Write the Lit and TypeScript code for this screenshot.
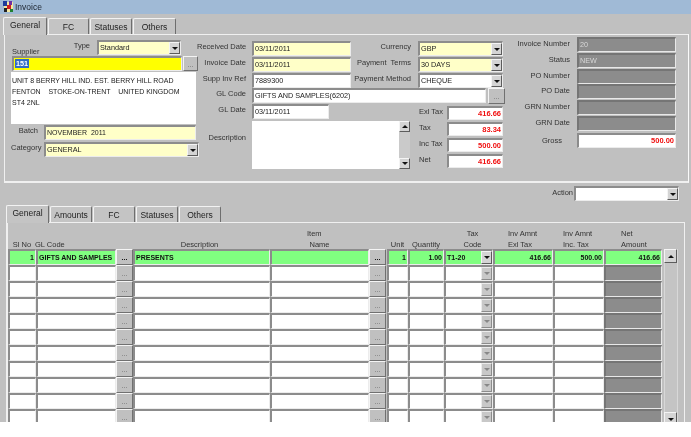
import { LitElement, html, css } from 'lit';
import { customElement } from 'lit/decorators.js';

@customElement('app-root')
export class AppRoot extends LitElement {
  static styles = css`
    :host {
      display: block;
      width: 691px;
      height: 437px;
      background: #fff;
      font-family: 'Liberation Sans', Arial, sans-serif;
      font-size: 7.5px;
      color: #222;
      overflow: hidden;
    }
    .screen {
      height: 422px;
      background: #c0c0c0;
      overflow: hidden;
      filter: blur(0.25px);
    }
    .title {
      height: 14px;
      background: #a0bad6;
      display: flex;
      align-items: center;
      padding-left: 3px;
      gap: 1px;
      font-size: 8.5px;
      color: #1c2430;
    }
    .tabs {
      display: flex;
      align-items: flex-end;
      box-sizing: border-box;
    }
    .tabs.top {
      height: 20px;
      padding-left: 3px;
      gap: 1px;
    }
    .tabs.low {
      height: 22px;
      padding-left: 6px;
      gap: 1px;
    }
    .tab {
      box-sizing: border-box;
      height: 16px;
      background: #c4c4c4;
      border: 1px solid #f2f2f2;
      border-right: 1px solid #6e6e6e;
      border-bottom: none;
      border-radius: 2px 2px 0 0;
      text-align: center;
      line-height: 16px;
      font-size: 8.5px;
    }
    .tab.on {
      height: 18px;
      line-height: 15px;
      position: relative;
      top: 1px;
      z-index: 1;
    }
    .upper {
      box-sizing: border-box;
      height: 149px;
      margin: 0 2px 0 4px;
      border: 1px solid #f0f0f0;
      border-width: 1px 1px 2px 1px;
      border-right-color: #fafafa;
      display: flex;
    }
    /* sunken text boxes */
    .in {
      box-sizing: border-box;
      height: 15px;
      line-height: 12px;
      border: 1px solid;
      border-width: 2px 1px 1px 2px;
      border-color: #8c8c8c #ececec #ececec #8c8c8c;
      background: #fff;
      padding-left: 1px;
      font-size: 7.25px;
      white-space: pre;
      overflow: hidden;
      color: #222;
      flex: none;
    }
    .y { background: #ffffc8; }
    .bright { background: #ffff00; }
    .grey { background: #8c8c8c; color: #d8d8d8; border-color: #757575 #e8e8e8 #e8e8e8 #757575; }
    .money { text-align: right; color: #f01010; font-weight: 700; padding-right: 1px; font-size: 7.5px; }
    .sel {
      background: #316ac5;
      color: #fff;
      font-weight: 700;
      padding: 0 1px;
    }
    .btn {
      box-sizing: border-box;
      flex: none;
      height: 15px;
      width: 15px;
      background: #c0c0c0;
      border: 1px solid;
      border-color: #f4f4f4 #707070 #707070 #f4f4f4;
      color: #666;
      text-align: center;
      line-height: 15px;
      font-size: 7px;
    }
    .btn.wide { width: 17px; height: 16px; margin-left: 2px; }
    /* dropdown: the frame is sunken, the arrow button sits inside it */
    .combo {
      box-sizing: border-box;
      display: flex;
      flex: none;
      height: 15px;
      border: 1px solid;
      border-width: 2px 1px 1px 2px;
      border-color: #8c8c8c #ececec #ececec #8c8c8c;
      background: #fff;
    }
    .combo .in { flex: 1; min-width: 0; border: none; height: 100%; line-height: 12px; background: transparent; }
    .combo.y { background: #ffffc8; }
    .combo.g { background: #80ff80; }
    .w84 { width: 84px; }
    .w85 { width: 85px; }
    .w99 { width: 99px; }
    .w105 { width: 105px; }
    .w155 { width: 155px; }
    .w152 { width: 152px; }
    .w170 { width: 170px; }
    .w234 { width: 234px; }
    .w77 { width: 77px; }
    .arrow {
      box-sizing: border-box;
      flex: none;
      width: 11px;
      background: #d4d4d4;
      border: 1px solid;
      border-color: #f4f4f4 #5c5c5c #5c5c5c #f4f4f4;
      display: flex;
      align-items: center;
      justify-content: center;
    }
    .arrow::after {
      content: '';
      border: 3px solid transparent;
      border-top: 3px solid #111;
      border-bottom: none;
    }
    .arrow.up::after {
      border-top: none;
      border-bottom: 3px solid #111;
    }
    .arrow.off { background: #c8c8c8; border-color: #ececec #8c8c8c #8c8c8c #ececec; }
    .arrow.off::after { border-top-color: #888; }
    .lb { text-align: right; flex: none; color: #333; white-space: pre; line-height: 12px; }

    /* supplier block */
    .left {
      box-sizing: border-box;
      width: 192px;
      flex: none;
      padding: 5px 0 0 6px;
      display: flex;
      flex-direction: column;
    }
    .typerow { display: flex; height: 16px; padding-left: 1px; }
    .typerow .sup { width: 56px; padding-top: 6px; text-align: left; }
    .typerow .ty { width: 22px; margin-right: 7px; }
    .suprow { display: flex; gap: 1px; padding-left: 1px; height: 16px; }
    .addr {
      box-sizing: border-box;
      width: 185px;
      height: 52px;
      background: #fff;
      padding: 3px 0 0 1px;
      line-height: 11px;
      font-size: 7px;
      white-space: pre;
    }
    .batch { display: flex; margin-top: 1px; height: 16px; }
    .batch .in { font-size: 7px; }
    .cat { display: flex; margin-top: 1px; }
    .batch .lb, .cat .lb { width: 27px; margin-right: 6px; }

    /* dates and totals */
    .mid {
      box-sizing: border-box;
      width: 308px;
      flex: none;
      padding-top: 6px;
    }
    .mrow { display: flex; height: 16px; }
    .mrow.r3 { height: 15px; }
    .mrow .a { width: 49px; margin-right: 6px; }
    .mrow .b { width: 60px; margin-right: 7px; }
    .lowmid { display: flex; }
    .descbox { width: 222px; flex: none; }
    .desc { display: flex; margin-top: 1px; }
    .desc .a { width: 49px; margin-right: 6px; padding-top: 11px; }
    .descarea { width: 147px; height: 48px; background: #fff; flex: none; }
    .vbar { width: 11px; display: flex; flex-direction: column; background: #cacaca; flex: none; }
    .vbar .arrow { width: 100%; height: 11px; }
    .vbar .track { flex: 1; }
    .totals {
      padding-top: 2px;
      display: grid;
      grid-template-columns: 28px 56px;
      grid-auto-rows: 16px;
      align-items: start;
    }
    .totals .t { line-height: 12px; color: #333; }
    .totals .in { height: 14px; }

    /* invoice status block */
    .right {
      padding: 2px 0 0 1px;
      display: grid;
      grid-template-columns: 64px 99px;
      column-gap: 7px;
      grid-auto-rows: 15.75px;
      align-items: start;
    }
    .right .lb { line-height: 13px; }
    .right .gross { margin-top: 1px; }
    .right .grossl { margin-top: 2px; padding-right: 8px; }

    .action {
      box-sizing: border-box;
      display: flex;
      justify-content: flex-end;
      height: 17px;
      padding: 3px 12px 0 0;
      line-height: 13px;
    }
    .action .lb { margin-right: 1px; line-height: 13px; }

    .lower {
      box-sizing: border-box;
      height: 200px;
      margin: 0 6px;
      border: 1px solid #f0f0f0;
      border-width: 1px 1px 0 2px;
      padding-top: 6px;
      display: flex;
      overflow: hidden;
    }
    .lines { width: 654px; flex: none; }
    .head, .row {
      display: grid;
      grid-template-columns: 28px 80px 17px 137px 99px 18px 21px 36px 49px 60px 51px 58px;
    }
    .head { height: 20px; text-align: center; color: #333; line-height: 10.5px; }
    .head div { align-self: end; white-space: pre; }
    .head .gl { text-align: left; margin-left: -1px; }
    .head .de { padding-right: 4px; }
    .head .tx { padding-left: 8px; }
    .head .am1 { text-align: left; padding-left: 15px; }
    .head .am2 { text-align: left; padding-left: 10px; }
    .head .am3 { text-align: left; padding-left: 17px; }
    .row { height: 16px; }
    .row .in { height: 16px; line-height: 13px; }
    .row .btn { height: 16px; width: 17px; }
    .row .combo { height: 16px; width: auto; }
    .g { background: #80ff80; font-weight: 700; color: #111; font-size: 7px; }
    .num { text-align: right; padding-right: 1px; }
    .row .btn.live { color: #111; font-weight: 700; }
    .scroll {
      width: 13px;
      margin: 20px 0 0 2px;
      display: flex;
      flex-direction: column;
      background: #c4c4c4;
      border-right: 1px solid #d8d8d8;
      flex: none;
      height: 177px;
    }
    .scroll .arrow { width: 100%; height: 14px; }
    .scroll .track { flex: 1; border-left: 1px solid #d8d8d8; }
  `;

  // one line of the table, the first is the filled one
  private line(i: number) {
    const f = i === 0;
    const c = f ? 'in g' : 'in';
    return html`<div class="row">
      <div class="${c} num">${f ? '1' : ''}</div>
      <div class="${c}">${f ? 'GIFTS AND SAMPLES' : ''}</div>
      <div class="btn ${f ? 'live' : ''}">...</div>
      <div class="${c}">${f ? 'PRESENTS' : ''}</div>
      <div class="${c}"></div>
      <div class="btn ${f ? 'live' : ''}">...</div>
      <div class="${c} num">${f ? '1' : ''}</div>
      <div class="${c} num">${f ? '1.00' : ''}</div>
      <div class="combo ${f ? 'g' : ''}"><div class="${c}">${f ? 'T1-20' : ''}</div><div class="arrow ${f ? '' : 'off'}"></div></div>
      <div class="${c} num">${f ? '416.66' : ''}</div>
      <div class="${c} num">${f ? '500.00' : ''}</div>
      <div class="${f ? 'in g num' : 'in grey'}">${f ? '416.66' : ''}</div>
    </div>`;
  }

  render() {
    const upTabs = ['General', 'FC', 'Statuses', 'Others'];
    const upW = [44, 41, 42, 43];
    const lowTabs = ['General', 'Amounts', 'FC', 'Statuses', 'Others'];
    const lowW = [43, 42, 42, 42, 42];
    const info = ['Invoice Number', 'Status', 'PO Number', 'PO Date', 'GRN Number', 'GRN Date'];
    const infoVal = ['20', 'NEW', '', '', '', ''];
    const totals = [['Exl Tax', '416.66'], ['Tax', '83.34'], ['Inc Tax', '500.00'], ['Net', '416.66']];
    return html`
      <div class="screen">
        <div class="title">
          <svg width="11" height="12" viewBox="0 0 11 12">
            <rect x="1" y="1" width="9" height="10" fill="#f4e8a0"/>
            <rect x="0" y="0" width="4" height="5" fill="#1c3c9c"/>
            <rect x="6" y="0" width="3" height="4" fill="#7030a0"/>
            <rect x="4" y="4" width="4" height="4" fill="#d02020"/>
            <rect x="1" y="7" width="3" height="4" fill="#202020"/>
            <rect x="7" y="8" width="3" height="3" fill="#208030"/>
          </svg>
          <span>Invoice</span>
        </div>
        <div class="tabs top">
          ${upTabs.map((t, i) => html`<div class="tab ${i === 0 ? 'on' : ''}" style="width:${upW[i]}px">${t}</div>`)}
        </div>
        <div class="upper">
          <div class="left">
            <div class="typerow">
              <div class="lb sup">Supplier</div>
              <div class="lb ty">Type</div>
              <div class="combo y w84"><div class="in">Standard</div><div class="arrow"></div></div>
            </div>
            <div class="suprow">
              <div class="in bright w170"><span class="sel">151</span></div>
              <div class="btn">...</div>
            </div>
            <div class="addr">UNIT 8 BERRY HILL IND. EST. BERRY HILL ROAD
FENTON    STOKE-ON-TRENT    UNITED KINGDOM
ST4 2NL</div>
            <div class="batch"><div class="lb">Batch</div><div class="in y w152">NOVEMBER  2011</div></div>
            <div class="cat">
              <div class="lb">Category</div>
              <div class="combo y w155"><div class="in">GENERAL</div><div class="arrow"></div></div>
            </div>
          </div>

          <div class="mid">
            <div class="mrow">
              <div class="lb a">Received Date</div><div class="in y w99">03/11/2011</div>
              <div class="lb b">Currency</div>
              <div class="combo y w85"><div class="in">GBP</div><div class="arrow"></div></div>
            </div>
            <div class="mrow">
              <div class="lb a">Invoice Date</div><div class="in y w99">03/11/2011</div>
              <div class="lb b">Payment  Terms</div>
              <div class="combo y w85"><div class="in">30 DAYS</div><div class="arrow"></div></div>
            </div>
            <div class="mrow r3">
              <div class="lb a">Supp Inv Ref</div><div class="in w99">7889300</div>
              <div class="lb b">Payment Method</div>
              <div class="combo w85"><div class="in">CHEQUE</div><div class="arrow"></div></div>
            </div>
            <div class="mrow">
              <div class="lb a">GL Code</div><div class="in w234">GIFTS AND SAMPLES(6202)</div>
              <div class="btn wide">...</div>
            </div>
            <div class="lowmid">
              <div class="descbox">
                <div class="mrow">
                  <div class="lb a">GL Date</div><div class="in w77">03/11/2011</div>
                </div>
                <div class="desc">
                  <div class="lb a">Description</div>
                  <div class="descarea"></div>
                  <div class="vbar">
                    <div class="arrow up"></div><div class="track"></div><div class="arrow"></div>
                  </div>
                </div>
              </div>
              <div class="totals">
                ${totals.map(([l, v]) => html`<div class="t">${l}</div><div class="in money">${v}</div>`)}
              </div>
            </div>
          </div>

          <div class="right">
            ${info.map((l, i) => html`<div class="lb">${l}</div><div class="in grey">${infoVal[i]}</div>`)}
            <div class="lb grossl">Gross</div>
            <div class="in money gross">500.00</div>
          </div>
        </div>

        <div class="action">
          <div class="lb">Action</div>
          <div class="combo w105"><div class="in"></div><div class="arrow"></div></div>
        </div>

        <div class="tabs low">
          ${lowTabs.map((t, i) => html`<div class="tab ${i === 0 ? 'on' : ''}" style="width:${lowW[i]}px">${t}</div>`)}
        </div>
        <div class="lower">
          <div class="lines">
            <div class="head">
              <div>Sl No</div><div class="gl">GL Code</div><div></div><div class="de">Description</div>
              <div>${'Item     \nName'}</div><div></div><div>Unit</div><div>Quantity</div>
              <div class="tx">${'Tax\nCode'}</div><div class="am1">${'Inv Amnt\nExl Tax'}</div>
              <div class="am2">${'Inv Amnt\nInc. Tax'}</div><div class="am3">${'Net\nAmount'}</div>
            </div>
            ${Array.from({ length: 11 }, (_, i) => this.line(i))}
          </div>
          <div class="scroll">
            <div class="arrow up"></div><div class="track"></div><div class="arrow"></div>
          </div>
        </div>
      </div>
    `;
  }
}

declare global {
  interface HTMLElementTagNameMap {
    'app-root': AppRoot;
  }
}
